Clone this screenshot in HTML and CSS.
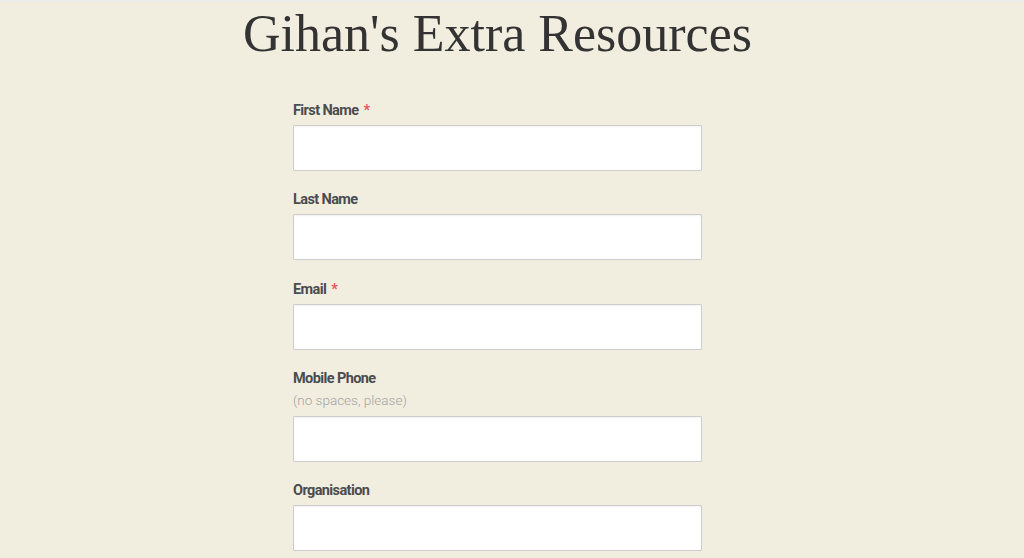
FILE: index.html
```html
<!DOCTYPE html>
<html lang="en">
<head>
<meta charset="utf-8">
<title>Gihan's Extra Resources</title>
<link rel="stylesheet" href="styles.css">
</head>
<body>
<div class="topbar"></div>
<main class="page">
  <h1 class="title">Gihan's Extra Resources</h1>
  <form class="form">
    <div class="field">
      <label class="label">First Name <span class="req">*</span></label>
      <input class="input" type="text">
    </div>
    <div class="field">
      <label class="label">Last Name</label>
      <input class="input" type="text">
    </div>
    <div class="field">
      <label class="label">Email <span class="req">*</span></label>
      <input class="input" type="email">
    </div>
    <div class="field">
      <label class="label">Mobile Phone</label>
      <span class="hint">(no spaces, please)</span>
      <input class="input" type="text">
    </div>
    <div class="field">
      <label class="label">Organisation</label>
      <input class="input" type="text">
    </div>
  </form>
</main>
</body>
</html>
```

FILE: styles.css
```css
html, body {
  margin: 0;
  padding: 0;
  background: #f2eedf;
  overflow: hidden;
}
.topbar {
  height: 2px;
  background: #ececea;
}
.page {
  width: 995px;
  display: flex;
  flex-direction: column;
  align-items: center;
}
.title {
  margin: 0;
  height: 64px;
  font-family: "Liberation Serif", "DejaVu Serif", serif;
  font-weight: 400;
  font-size: 52px;
  line-height: 60px;
  padding-top: 2px;
  box-sizing: border-box;
  color: #333;
}
.form {
  width: 409px;
  padding-top: 34px;
  display: flex;
  flex-direction: column;
  gap: 18.3px;
}
.field {
  display: flex;
  flex-direction: column;
}
.label {
  display: block;
  height: 21px;
  font-family: Roboto, "Liberation Sans", sans-serif;
  font-weight: 700;
  font-size: 14.5px;
  letter-spacing: -0.6px;
  line-height: 21px;
  color: #4a4c50;
  margin-bottom: 4px;
}
.req {
  color: #e8545f;
  margin-left: 2px;
}
.hint {
  height: 18px;
  font-family: Roboto, "Liberation Sans", sans-serif;
  font-weight: 300;
  font-size: 13.5px;
  line-height: 18px;
  color: #a3a3a3;
  margin-top: -2px;
  margin-bottom: 7px;
}
.input {
  box-sizing: border-box;
  width: 409px;
  height: 46px;
  margin: 0;
  border: 1px solid #cdcdcd;
  border-radius: 1px;
  background: #fff;
  box-shadow: inset 0 1px 2px rgba(0, 0, 0, 0.06);
  outline: none;
}
```
